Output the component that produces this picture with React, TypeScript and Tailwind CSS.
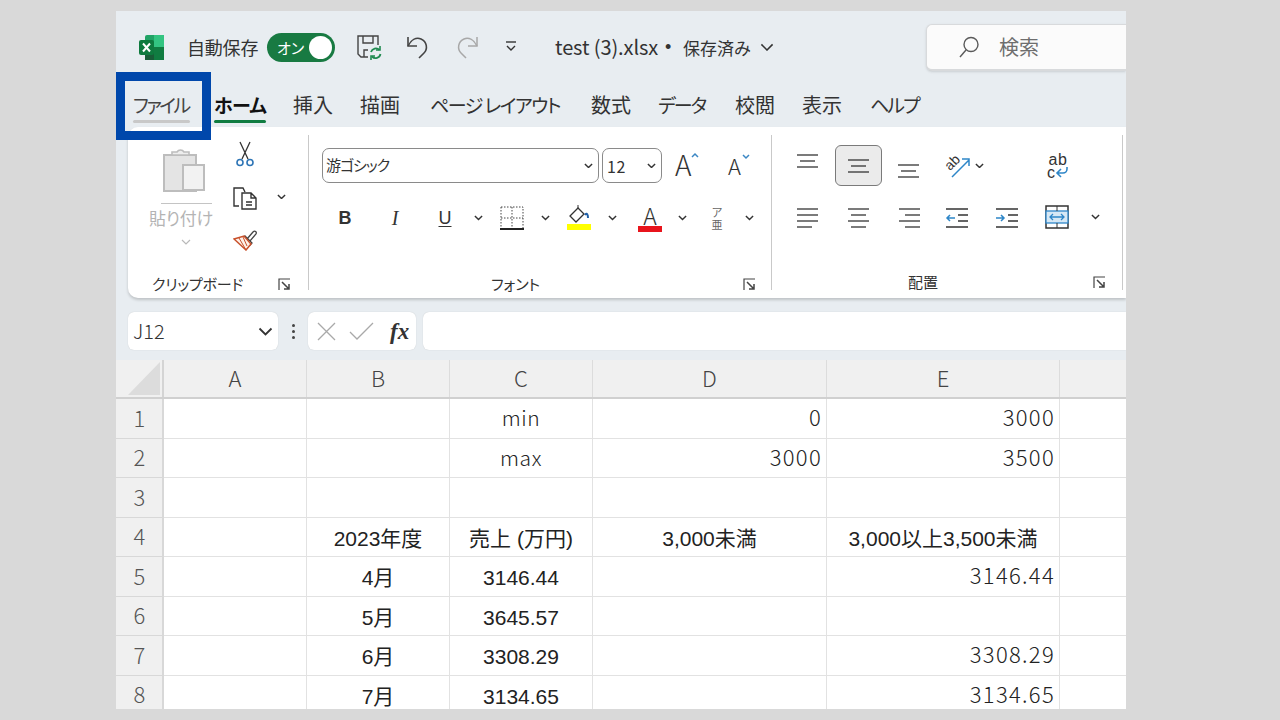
import React from "react";

const JP = "font-['Noto_Sans_CJK_JP','Noto_Sans',sans-serif]";
const Chev = ({ c = "#333", w = 10, sw = 1.6 }: { c?: string; w?: number; sw?: number }) => (
  <svg width={w} height={w * 0.6} viewBox="0 0 10 6" fill="none"><path d="M1 1l4 4 4-4" stroke={c} strokeWidth={sw} /></svg>
);
const Launcher = () => (
  <svg className="mt-[3px]" width="13" height="13" viewBox="0 0 13 13" fill="none" stroke="#444" strokeWidth="1.2"><path d="M1 12V1h11" /><path d="M4 4l7 7M11 6v5H6" strokeWidth="1.5" /></svg>
);
const Lines = ({ kind }: { kind: number[][] }) => (
  <svg width="24" height="22" viewBox="0 0 24 22" stroke="#333" strokeWidth="1.3">
    {kind.map((k, i) => <line key={i} x1={k[0]} x2={k[1]} y1={k[2]} y2={k[2]} />)}
  </svg>
);
const Slot = ({ w, children, cn = "" }: { w: number; children?: React.ReactNode; cn?: string }) => (
  <div style={{ width: w }} className={`flex items-center justify-center shrink-0 ${cn}`}>{children}</div>
);

const tabs: [string, number, string][] = [
  ["ホーム", 79, "text-[19px] tracking-[-0.7px] font-bold text-[#111]"],
  ["挿入", 67, "text-[20px]"],
  ["描画", 70, "text-[20px]"],
  ["ページ レイアウト", 161, "text-[19px] tracking-[-1.5px]"],
  ["数式", 67, "text-[20px]"],
  ["データ", 77, "text-[19px] tracking-[-2px]"],
  ["校閲", 67, "text-[20px]"],
  ["表示", 68, "text-[20px]"],
  ["ヘルプ", 60, "text-[19px] tracking-[-2px]"],
];

type Cell = [string, "c" | "r" | "a"];
const rows: Cell[][] = [
  [["", "c"], ["", "c"], ["min", "c"], ["0", "r"], ["3000", "r"]],
  [["", "c"], ["", "c"], ["max", "c"], ["3000", "r"], ["3500", "r"]],
  [["", "c"], ["", "c"], ["", "c"], ["", "r"], ["", "r"]],
  [["", "c"], ["2023年度", "a"], ["売上 (万円)", "a"], ["3,000未満", "a"], ["3,000以上3,500未満", "a"]],
  [["", "c"], ["4月", "a"], ["3146.44", "a"], ["", "r"], ["3146.44", "r"]],
  [["", "c"], ["5月", "a"], ["3645.57", "a"], ["", "r"], ["", "r"]],
  [["", "c"], ["6月", "a"], ["3308.29", "a"], ["", "r"], ["3308.29", "r"]],
  [["", "c"], ["7月", "a"], ["3134.65", "a"], ["", "r"], ["3134.65", "r"]],
];
const GRID = "grid grid-cols-[48px_143px_143px_143px_234px_233px_67px]";

export default function App() {
  return (
    <div className={`w-[1280px] h-[720px] bg-[#d9d9d9] pt-[11px] pl-[116px] overflow-hidden ${JP}`}>
      <div className="relative w-[1010px] h-[698px] bg-[#e8edf1] overflow-hidden flex flex-col text-[#333]">
        {/* title bar */}
        <div className="h-[61px] shrink-0 flex items-center pt-[11px]">
          <div className="ml-[23px] w-[26px] h-[25px] shrink-0">
            <svg width="26" height="25" viewBox="0 0 26 25">
              <rect x="6" y="0" width="19" height="25" rx="2" fill="#21a366" />
              <rect x="15" y="0" width="10" height="12" fill="#33c481" />
              <rect x="15" y="12" width="10" height="13" fill="#107c41" />
              <rect x="6" y="12" width="9" height="13" fill="#185c37" />
              <rect x="0" y="5" width="15" height="15" rx="2" fill="#0e7a3e" />
              <path d="M4 8.500l7 8M11 8.500l-7 8" stroke="#fff" strokeWidth="2" />
            </svg>
          </div>
          <span className="ml-[22px] text-[18px] tracking-[-0.2px] leading-none w-[71px] whitespace-nowrap [font-feature-settings:'palt'] text-[#333]">自動保存</span>
          <div className="ml-[9px] w-[68px] h-[29px] rounded-full bg-[#187a42] flex items-center pl-[10px] pr-[3px] justify-between shrink-0">
            <span className="text-white text-[15px] leading-none [font-feature-settings:'palt']">オン</span>
            <span className="w-[23px] h-[23px] rounded-full bg-white" />
          </div>
          <div className="ml-[21px] w-[26px] h-[27px] shrink-0">
            <svg width="26" height="27" viewBox="0 0 26 27" fill="none" stroke="#444" strokeWidth="1.4">
              <path d="M12 23H5l-3-3V2h20v9" />
              <path d="M7 2v7h10V2M8 23v-7h4" />
              <path d="M15 18a5 5 0 0 1 8.500-2M24.500 20a5 5 0 0 1-8.500 2.500" stroke="#1f8a50" strokeWidth="1.8" />
              <path d="M24 12v4h-4M15 26v-4h4" stroke="#1f8a50" strokeWidth="1.6" />
            </svg>
          </div>
          <div className="ml-[24px] w-[24px] shrink-0">
            <svg width="24" height="26" viewBox="0 0 24 26" fill="none" stroke="#444" strokeWidth="1.6"><path d="M2 3v9h9" /><path d="M2 12C5 6 10 3 15 5c6 2.500 7 10 3 14l-5 5" /></svg>
          </div>
          <div className="ml-[25px] w-[24px] shrink-0">
            <svg width="24" height="26" viewBox="0 0 24 26" fill="none" stroke="#a8a8a8" strokeWidth="1.5"><path d="M22 3v9h-9" /><path d="M22 12C19 6 14 3 9 5 3 7.500 2 15 6 19l5 5" /></svg>
          </div>
          <div className="ml-[26px] w-[12px] shrink-0">
            <svg width="12" height="12" viewBox="0 0 12 12" fill="none" stroke="#333" strokeWidth="1.4"><path d="M1 1h10" /><path d="M2 5l4 4 4-4" /></svg>
          </div>
          <span className="ml-[38px] text-[20px] tracking-[-0.1px] leading-none whitespace-nowrap w-[106px]">test (3).xlsx</span>
          <span className="ml-[4px] w-[18px] text-[18px] leading-none font-['Liberation_Sans',sans-serif]">•</span>
          <span className="text-[17px] leading-none whitespace-nowrap w-[77px] [font-feature-settings:'palt']">保存済み</span>
          <Chev w={14} sw={1.1} />
          <div className="ml-[152px] flex-1 h-[47px] bg-[#fbfbfb] rounded-l-[6px] border border-r-0 border-[#d8dadc] border-b-2 shadow-sm flex items-center pl-[31px] shrink-0">
            <svg width="22" height="22" viewBox="0 0 22 22" fill="none" stroke="#5a5a5a" strokeWidth="1.4"><circle cx="13" cy="8.500" r="7" /><path d="M8 14l-6 7" /></svg>
            <span className="ml-[19px] text-[20px] text-[#6e6e6e] leading-none">検索</span>
          </div>
        </div>

        {/* tabs */}
        <div className="h-[55px] shrink-0 flex items-start pt-[20px] text-[#333]">
          <div className="ml-[17px] w-[81px] shrink-0 [font-feature-settings:'palt'] text-[19px] tracking-[-2.5px] leading-[26px] whitespace-nowrap">
            <span className="inline-block w-[57px] relative text-[#444]">ファイル
              <span className="absolute left-0 right-0 top-[28px] h-[3px] bg-[#c8c8c8] rounded" />
            </span>
          </div>
          {tabs.map(([t, w, cn], i) => (
            <div key={t} style={{ width: w }} className={`shrink-0 leading-[26px] whitespace-nowrap [font-feature-settings:'palt'] ${cn}`}>
              <span className="relative inline-block">{t}
                {i === 0 && <span className="absolute left-0 right-0 top-[28px] h-[3px] bg-[#107c41] rounded" />}
              </span>
            </div>
          ))}
        </div>

        {/* ribbon */}
        <div className="ml-[12px] h-[171px] shrink-0 bg-white rounded-l-[10px] shadow-[0_2px_3px_rgba(0,0,0,0.18)] flex py-[8px]">
          {/* clipboard */}
          <div className="w-[181px] shrink-0 border-r border-[#c9c9c9] flex flex-col">
            <div className="h-[136px] shrink-0 flex">
              <div className="w-[80px] ml-[22px] flex flex-col items-center">
                <svg className="mt-[12px] ml-[-10px]" width="44" height="46" viewBox="0 0 44 46">
                  <rect x="1" y="8" width="32" height="36" fill="#e4e4e4" stroke="#bdbdbd" strokeWidth="2" />
                  <path d="M9 8V5h5a4 4 0 0 1 7 0h5v3z" fill="#eee" stroke="#bdbdbd" strokeWidth="1.600" />
                  <rect x="20" y="18" width="21" height="25" fill="#f2f2f2" stroke="#bdbdbd" strokeWidth="2" />
                </svg>
                <div className="mt-[10px] ml-[-8px] w-[51px] h-px bg-[#c4c4c4]" />
                <span className="mt-[3px] ml-[-18px] text-[17px] tracking-[-0.2px] leading-[22px] text-[#b4b4b4] [font-feature-settings:'palt'] whitespace-nowrap">貼り付け</span>
                <div className="mt-[10px] ml-[-8px]"><Chev c="#b9b9b9" w={10} sw={1.2} /></div>
              </div>
              <div className="w-[36px] ml-[-3px] flex flex-col items-center">
                <svg className="mt-[6px]" width="18" height="26" viewBox="0 0 18 26" fill="none">
                  <path d="M4 1l8 17M14 1L6 18" stroke="#333" strokeWidth="1.300" />
                  <circle cx="4" cy="21.500" r="3" stroke="#2e75b6" strokeWidth="1.600" />
                  <circle cx="14" cy="21.500" r="3" stroke="#2e75b6" strokeWidth="1.600" />
                </svg>
                <svg className="mt-[19px]" width="26" height="25" viewBox="0 0 26 25" fill="none" stroke="#333" strokeWidth="1.400">
                  <path d="M7 20H2V2h9l2 4" />
                  <path d="M10 7h9l5 5v11H10zM19 7v5h5M14 16h6M14 19h6" />
                </svg>
                <svg className="mt-[16px]" width="25" height="24" viewBox="0 0 25 24" fill="none">
                  <path d="M14 12l6-7c2-2 4 0 3 2l-6 7zM12 9l7 7-2 2-7-7z" stroke="#444" strokeWidth="1.300" />
                  <path d="M1 12l10-3 7 8-5 6z" stroke="#c8502a" strokeWidth="1.500" fill="#fdf0e8" />
                  <path d="M6 11l7 12M10 10l4 9" stroke="#c8502a" strokeWidth="1" />
                </svg>
              </div>
              <div className="ml-[14px] mt-[59px]"><Chev w={9} /></div>
            </div>
            <div className="flex items-center h-[24px] shrink-0 pl-[24px]">
              <span className="text-[15px] leading-none w-[126px] tracking-[-0.2px] [font-feature-settings:'palt'] whitespace-nowrap">クリップボード</span>
              <Launcher />
            </div>
          </div>

          {/* font */}
          <div className="w-[463px] shrink-0 border-r border-[#c9c9c9] flex flex-col pl-[13px]">
            <div className="flex items-center h-[35px] mt-[13px]">
              <div className="w-[277px] h-[35px] border border-[#8a8a8a] rounded-[7px] flex items-center justify-between pl-[3px] pr-[5px]">
                <span className="text-[15px] leading-none tracking-[-1px] pb-[2px] [font-feature-settings:'palt']">游ゴシック</span>
                <Chev w={9} />
              </div>
              <div className="ml-[3px] w-[60px] h-[35px] border border-[#8a8a8a] rounded-[7px] flex items-center justify-between pl-[4px] pr-[5px]">
                <span className="text-[16px] leading-none tracking-[0.5px]">12</span>
                <Chev w={9} />
              </div>
              <div className="ml-[13px] w-[24px] text-[28px] font-light leading-none text-[#333] relative pb-[3px]">A
                <span className="absolute left-[16px] top-[2px]"><svg width="8" height="6" viewBox="0 0 8 6" fill="none" stroke="#3b87c4" strokeWidth="1.500"><path d="M1 5l3-3 3 3" /></svg></span>
              </div>
              <div className="ml-[29px] w-[22px] text-[22px] font-light leading-none text-[#333] relative pb-[1px]">A
                <span className="absolute left-[14px] top-[0px]"><svg width="8" height="6" viewBox="0 0 8 6" fill="none" stroke="#3b87c4" strokeWidth="1.500"><path d="M1 1l3 3 3-3" /></svg></span>
              </div>
            </div>
            <div className="flex items-center h-[28px] mt-[21px]">
              <Slot w={46} cn="font-['Liberation_Sans',sans-serif] font-bold text-[18px]">B</Slot>
              <Slot w={54} cn="font-['Liberation_Serif',serif] italic text-[20px]">I</Slot>
              <Slot w={46} cn="font-['Liberation_Sans',sans-serif] text-[18px] underline underline-offset-2">U</Slot>
              <Slot w={20}><Chev w={9} /></Slot>
              <Slot w={48}>
                <svg width="24" height="24" viewBox="0 0 24 24" fill="none" stroke="#444" strokeWidth="1" strokeDasharray="1.500 1.500"><path d="M1 1h22v22M1 1v22M12 1v21M1 12h22" /><path d="M0 23h24" strokeDasharray="none" strokeWidth="2" stroke="#222" /></svg>
              </Slot>
              <Slot w={18}><Chev w={9} /></Slot>
              <Slot w={50}>
                <svg width="24" height="26" viewBox="0 0 24 26" fill="none">
                  <path d="M11 3L3 11l6 6 8-8z" stroke="#333" strokeWidth="1.300" />
                  <path d="M11 3V0" stroke="#333" />
                  <path d="M18 10c2-3 3 0 3 3" stroke="#1f5fa8" strokeWidth="2" />
                  <rect x="0" y="19" width="24" height="6" fill="#ffff00" />
                </svg>
              </Slot>
              <Slot w={16}><Chev w={9} /></Slot>
              <Slot w={50} cn="ml-[5px]">
                <div className="flex flex-col items-center">
                  <span className="text-[23px] leading-[20px] font-light">A</span>
                  <span className="w-[24px] h-[6px] bg-[#e8141c] mt-[1px]" />
                </div>
              </Slot>
              <Slot w={14}><Chev w={9} /></Slot>
              <Slot w={50} cn="ml-[3px]">
                <div className="flex flex-col items-center leading-[12px] text-[11px] text-[#666]"><span>ア</span><span>亜</span></div>
              </Slot>
              <Slot w={14}><Chev w={9} /></Slot>
            </div>
            <div className="mt-[43px] h-[24px] flex items-center">
              <span className="ml-[169px] w-[252px] text-[15px] leading-none [font-feature-settings:'palt'] whitespace-nowrap">フォント</span>
              <Launcher />
            </div>
          </div>

          {/* alignment */}
          <div className="w-[351px] shrink-0 border-r border-[#c9c9c9] flex flex-col pl-[24px] relative">
            <div className="flex items-center h-[41px] mt-[10px]">
              <Slot w={24} cn="mb-[9px]"><Lines kind={[[1, 22, 5], [4, 19, 11], [1, 22, 17]]} /></Slot>
              <div className="ml-[15px] w-[47px] h-[41px] bg-[#ebebeb] border border-[#7a7a7a] rounded-[6px] flex items-center justify-center shrink-0"><Lines kind={[[1, 22, 5], [4, 19, 11], [1, 22, 17]]} /></div>
              <Slot w={24} cn="ml-[15px] mt-[10px]"><Lines kind={[[1, 22, 5], [4, 19, 11], [1, 22, 17]]} /></Slot>
              <div className="ml-[23px] w-[28px] shrink-0">
                <svg className="overflow-visible" width="28" height="26" viewBox="0 0 28 26" fill="none">
                  <text x="2" y="15" fontSize="14" fill="#333" transform="rotate(-45 8 12)" fontFamily="Liberation Sans">ab</text>
                  <path d="M8 24L25 7M18 6h7v7" stroke="#2e86c8" strokeWidth="1.500" />
                </svg>
              </div>
              <div className="ml-[3px]"><Chev w={9} /></div>
              <div className="ml-[62px] w-[24px] shrink-0 flex flex-col items-center relative">
                <span className="text-[16px] leading-[13px] tracking-[0.5px] font-['Liberation_Sans',sans-serif]">ab</span>
                <span className="flex items-center text-[16px] leading-[13px] font-['Liberation_Sans',sans-serif]">c
                  <svg width="14" height="12" viewBox="0 0 14 12" fill="none" stroke="#2e86c8" strokeWidth="1.600"><path d="M12 1v2a4 4 0 0 1-4 4H2M6 3L2 7l4 4" /></svg>
                </span>
              </div>
            </div>
            <div className="flex items-center h-[28px] mt-[19px]">
              <Slot w={24}><Lines kind={[[1, 22, 3], [1, 22, 9], [1, 22, 15], [1, 16, 21]]} /></Slot>
              <Slot w={24} cn="ml-[27px]"><Lines kind={[[1, 22, 3], [4, 19, 9], [1, 22, 15], [4, 19, 21]]} /></Slot>
              <Slot w={24} cn="ml-[27px]"><Lines kind={[[1, 22, 3], [7, 22, 9], [1, 22, 15], [7, 22, 21]]} /></Slot>
              <Slot w={24} cn="ml-[23px]">
                <svg width="24" height="22" viewBox="0 0 24 22" fill="none"><g stroke="#333" strokeWidth="1.300"><path d="M1 3h22M13 9h10M13 15h10M1 21h22" /></g><path d="M10 12H2M5 9l-3 3 3 3" stroke="#2e86c8" strokeWidth="1.500" /></svg>
              </Slot>
              <Slot w={24} cn="ml-[26px]">
                <svg width="24" height="22" viewBox="0 0 24 22" fill="none"><g stroke="#333" strokeWidth="1.300"><path d="M1 3h22M13 9h10M13 15h10M1 21h22" /></g><path d="M1 12h8M6 9l3 3-3 3" stroke="#2e86c8" strokeWidth="1.500" /></svg>
              </Slot>
              <Slot w={24} cn="ml-[26px]">
                <svg width="24" height="24" viewBox="0 0 24 24" fill="none">
                  <rect x="1" y="1" width="22" height="22" stroke="#333" strokeWidth="1.500" />
                  <rect x="1" y="6" width="22" height="12" fill="#d6e8f5" stroke="#2e86c8" strokeWidth="1.300" />
                  <path d="M12 1v5M12 18v5" stroke="#333" />
                  <path d="M5 12h14M8 9l-3 3 3 3M16 9l3 3-3 3" stroke="#2e86c8" strokeWidth="1.300" />
                </svg>
              </Slot>
              <Slot w={9} cn="ml-[22px]"><Chev w={9} /></Slot>
            </div>
            <div className="mt-[43px] h-[24px] flex items-center">
              <span className="ml-[112px] w-[185px] text-[15px] leading-none [font-feature-settings:'palt'] whitespace-nowrap">配置</span>
              <Launcher />
            </div>
          </div>
        </div>

        {/* formula bar */}
        <div className="mt-[14px] ml-[12px] h-[38px] flex shrink-0">
          <div className="w-[150px] bg-white rounded-[6px] flex items-center justify-between pl-[5px] pr-[5px] shadow-[0_0_1px_rgba(0,0,0,0.2)]">
            <span className="text-[20px] font-light leading-none text-[#333]">J12</span>
            <Chev c="#333" w={15} sw={1.2} />
          </div>
          <div className="w-[30px] flex flex-col items-center justify-center gap-[3px]">
            <span className="w-[3px] h-[3px] bg-[#444] rounded-full" />
            <span className="w-[3px] h-[3px] bg-[#444] rounded-full" />
            <span className="w-[3px] h-[3px] bg-[#444] rounded-full" />
          </div>
          <div className="w-[108px] bg-white rounded-[6px] flex items-center pl-[9px] shadow-[0_0_1px_rgba(0,0,0,0.2)]">
            <svg width="19" height="19" viewBox="0 0 19 19" fill="none" stroke="#a9a9a9" strokeWidth="1.300"><path d="M1 1l17 17M18 1L1 18" /></svg>
            <svg className="ml-[13px]" width="25" height="19" viewBox="0 0 25 19" fill="none" stroke="#a9a9a9" strokeWidth="1.300"><path d="M1 10l7 7L24 1" /></svg>
            <span className="ml-[16px] font-['Liberation_Serif',serif] italic font-bold text-[23px] leading-none text-[#333]">fx</span>
          </div>
          <div className="ml-[7px] flex-1 bg-white rounded-l-[6px] shadow-[0_0_1px_rgba(0,0,0,0.2)]" />
        </div>

        {/* sheet */}
        <div className="mt-[10px] flex-1 bg-white overflow-hidden">
          <div className={`${GRID} h-[39px] bg-[#f0f0f0] border-b-2 border-[#d0d0d0] text-[22px] text-[#444] font-light`}>
            <div className="border-r-2 border-[#d4d4d4] flex items-end justify-end pr-[2px] pb-[2px]">
              <svg width="32" height="33" viewBox="0 0 32 33"><path d="M32 0v33H0z" fill="#dcdcdc" /></svg>
            </div>
            {["A", "B", "C", "D", "E", ""].map((c, i) => (
              <div key={i} className="border-r border-[#dcdcdc] flex items-center justify-center leading-none pb-[3px]">{c}</div>
            ))}
          </div>
          {rows.map((r, i) => (
            <div key={i} className={`${GRID} h-[39.5px]`}>
              <div className="bg-[#f0f0f0] border-r-2 border-b border-[#d8d8d8] flex items-center justify-center pl-[1px] pb-[3px] text-[22px] leading-none text-[#555] font-light">{i + 1}</div>
              {r.map(([t, a], j) => (
                <div key={j} className={`border-r border-b border-[#e2e2e2] flex items-center whitespace-nowrap ${a === "r" ? "justify-end pr-[4px] pb-[3px] text-[22px] tracking-[1.3px] font-light text-[#222]" : a === "c" ? "justify-center pb-[1px] text-[21px] font-light text-[#222] tracking-[0.6px]" : "justify-center pt-[3px] text-[21px] font-['Liberation_Sans','Noto_Sans_CJK_JP',sans-serif] text-[#222] [font-feature-settings:'palt']"}`}>{t}</div>
              ))}
              <div className="border-r border-b border-[#e2e2e2]" />
            </div>
          ))}
        </div>

        {/* blue highlight */}
        <div className="absolute left-0 top-[61px] w-[95px] h-[68px] border-[9px] border-[#0047ab] pointer-events-none" />
      </div>
    </div>
  );
}
